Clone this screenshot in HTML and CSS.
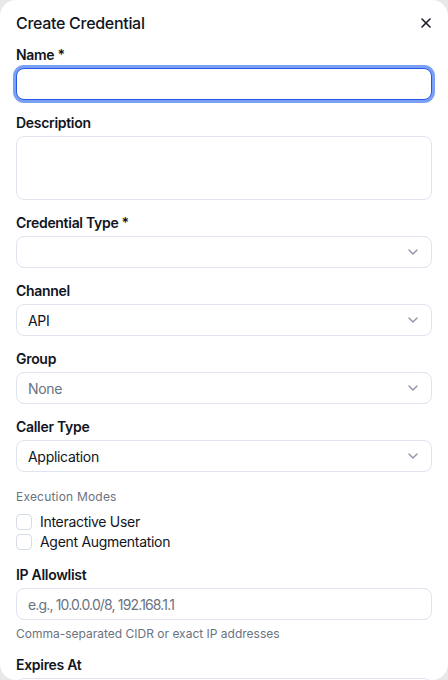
FILE: index.html
```html
<!DOCTYPE html>
<html lang="en">
<head>
<meta charset="utf-8">
<title>Create Credential</title>
<link rel="stylesheet" href="styles.css">
</head>
<body>
<div class="dialog">
  <div class="header">
    <h2 class="title">Create Credential</h2>
    <button class="close" aria-label="Close">
      <svg width="16" height="16" viewBox="0 0 24 24" fill="none" stroke="currentColor" stroke-width="2.4" stroke-linecap="round" stroke-linejoin="round"><path d="M18 6 6 18"/><path d="m6 6 12 12"/></svg>
    </button>
  </div>

  <div class="field">
    <label class="label">Name *</label>
    <div class="input focused"></div>
  </div>

  <div class="field">
    <label class="label">Description</label>
    <div class="input textarea"></div>
  </div>

  <div class="field">
    <label class="label">Credential Type *</label>
    <div class="input select"><span class="value"></span>
      <svg class="chev" width="16" height="16" viewBox="0 0 24 24" fill="none" stroke="currentColor" stroke-width="2" stroke-linecap="round" stroke-linejoin="round"><path d="m6 9 6 6 6-6"/></svg>
    </div>
  </div>

  <div class="field">
    <label class="label">Channel</label>
    <div class="input select"><span class="value">API</span>
      <svg class="chev" width="16" height="16" viewBox="0 0 24 24" fill="none" stroke="currentColor" stroke-width="2" stroke-linecap="round" stroke-linejoin="round"><path d="m6 9 6 6 6-6"/></svg>
    </div>
  </div>

  <div class="field">
    <label class="label">Group</label>
    <div class="input select"><span class="value muted">None</span>
      <svg class="chev" width="16" height="16" viewBox="0 0 24 24" fill="none" stroke="currentColor" stroke-width="2" stroke-linecap="round" stroke-linejoin="round"><path d="m6 9 6 6 6-6"/></svg>
    </div>
  </div>

  <div class="field">
    <label class="label">Caller Type</label>
    <div class="input select"><span class="value">Application</span>
      <svg class="chev" width="16" height="16" viewBox="0 0 24 24" fill="none" stroke="currentColor" stroke-width="2" stroke-linecap="round" stroke-linejoin="round"><path d="m6 9 6 6 6-6"/></svg>
    </div>
  </div>

  <div class="modes">
    <div class="modes-label">Execution Modes</div>
    <div class="checks">
      <label class="check"><span class="box"></span>Interactive User</label>
      <label class="check"><span class="box"></span>Agent Augmentation</label>
    </div>
  </div>

  <div class="field">
    <label class="label">IP Allowlist</label>
    <div class="input"><span class="value muted placeholder">e.g., 10.0.0.0/8, 192.168.1.1</span></div>
    <div class="help">Comma-separated CIDR or exact IP addresses</div>
  </div>

  <div class="field">
    <label class="label">Expires At</label>
    <div class="input"></div>
  </div>
</div>
</body>
</html>
```

FILE: styles.css
```css
* { box-sizing: border-box; }
html, body { margin: 0; padding: 0; }
body {
  background: #e8e8ea;
  font-family: Inter, "Noto Sans", sans-serif;
  color: #0f1320;
}
.dialog {
  width: 448px;
  height: 680px;
  background: #ffffff;
  border-radius: 16px;
  overflow: hidden;
  padding: 11px 16px 0;
}
.header {
  display: flex;
  align-items: center;
  justify-content: space-between;
  height: 24px;
  margin-bottom: 10px;
}
.title {
  margin: 0;
  font-size: 16px;
  line-height: 24px;
  font-weight: 500;
  letter-spacing: -0.3px;
  color: #111522;
}
.close {
  border: 0;
  background: none;
  padding: 0;
  margin-right: -2px;
  width: 16px;
  height: 16px;
  color: #1a1d2b;
  display: flex;
}
.field {
  display: flex;
  flex-direction: column;
  gap: 3px;
  margin-bottom: 13px;
}
.label {
  font-size: 14px;
  line-height: 20px;
  font-weight: 600;
  letter-spacing: -0.3px;
  color: #111522;
}
.input {
  height: 32px;
  border: 1px solid #dfe4ee;
  border-radius: 8px;
  background: #fff;
  display: flex;
  align-items: center;
  padding: 0 10px 0 10px;
  font-size: 14px;
  letter-spacing: -0.3px;
}
.input.focused {
  border-color: #2457e8;
  box-shadow: 0 0 0 3px #7ba1f6;
}
.input.textarea { height: 64px; }
.select { justify-content: space-between; }
.value { color: #111522; padding-left: 1px; }
.value.muted { color: #6b7280; }
.placeholder { letter-spacing: -0.85px; }
.chev { color: #8d93a3; flex: none; }
.modes {
  padding-top: 4px;
  margin-bottom: 13px;
}
.modes-label {
  font-size: 12px;
  line-height: 16px;
  letter-spacing: 0.2px;
  color: #6b7280;
}
.checks {
  margin-top: 7px;
  display: flex;
  flex-direction: column;
}
.check {
  display: flex;
  align-items: center;
  gap: 8px;
  font-size: 14px;
  line-height: 20px;
  letter-spacing: -0.3px;
  color: #111522;
}
.box {
  width: 16px;
  height: 16px;
  border: 1px solid #d6dbe3;
  border-radius: 4px;
  background: #fff;
}
.help {
  margin-top: 3px;
  font-size: 12px;
  line-height: 16px;
  color: #6b7280;
}
```
